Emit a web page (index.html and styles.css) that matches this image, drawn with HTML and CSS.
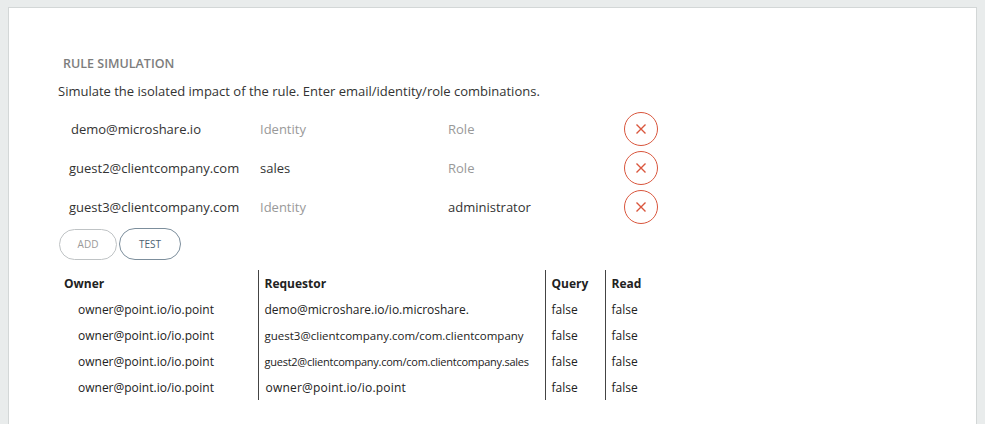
FILE: index.html
```html
<!DOCTYPE html>
<html>
<head>
<meta charset="utf-8">
<link rel="stylesheet" href="styles.css">
</head>
<body>
<div class="card">
  <div class="heading">RULE SIMULATION</div>
  <div class="desc">Simulate the isolated impact of the rule. Enter email/identity/role combinations.</div>
  <div class="sim-rows">
    <div class="sim-row">
      <div class="field email e1">demo@microshare.io</div>
      <div class="field ph">Identity</div>
      <div class="field ph">Role</div>
      <button class="remove"><svg width="12" height="12" viewBox="0 0 12 12"><path d="M1.5 1.5L10.5 10.5M10.5 1.5L1.5 10.5" stroke="#d9563d" stroke-width="1.4" fill="none"/></svg></button>
    </div>
    <div class="sim-row">
      <div class="field email">guest2@clientcompany.com</div>
      <div class="field">sales</div>
      <div class="field ph">Role</div>
      <button class="remove"><svg width="12" height="12" viewBox="0 0 12 12"><path d="M1.5 1.5L10.5 10.5M10.5 1.5L1.5 10.5" stroke="#d9563d" stroke-width="1.4" fill="none"/></svg></button>
    </div>
    <div class="sim-row">
      <div class="field email">guest3@clientcompany.com</div>
      <div class="field ph">Identity</div>
      <div class="field">administrator</div>
      <button class="remove"><svg width="12" height="12" viewBox="0 0 12 12"><path d="M1.5 1.5L10.5 10.5M10.5 1.5L1.5 10.5" stroke="#d9563d" stroke-width="1.4" fill="none"/></svg></button>
    </div>
  </div>
  <div class="actions">
    <button class="pill add">ADD</button>
    <button class="pill test">TEST</button>
  </div>
  <table class="results">
    <thead>
      <tr><th class="c-owner">Owner</th><th class="c-req">Requestor</th><th class="c-q">Query</th><th class="c-r">Read</th></tr>
    </thead>
    <tbody>
      <tr><td class="c-owner">owner@point.io/io.point</td><td class="c-req">demo@microshare.io/io.microshare.</td><td class="c-q">false</td><td class="c-r">false</td></tr>
      <tr><td class="c-owner">owner@point.io/io.point</td><td class="c-req small">guest3@clientcompany.com/com.clientcompany</td><td class="c-q">false</td><td class="c-r">false</td></tr>
      <tr><td class="c-owner">owner@point.io/io.point</td><td class="c-req smaller">guest2@clientcompany.com/com.clientcompany.sales</td><td class="c-q">false</td><td class="c-r">false</td></tr>
      <tr><td class="c-owner">owner@point.io/io.point</td><td class="c-req spaced">owner@point.io/io.point</td><td class="c-q">false</td><td class="c-r">false</td></tr>
    </tbody>
  </table>
</div>
</body>
</html>
```
FILE: styles.css
```css
html, body {
  margin: 0;
  padding: 0;
  height: 100%;
  overflow: hidden;
}
body {
  background: #e9ecec;
  font-family: "Open Sans", "Noto Sans", sans-serif;
  color: #333;
}
.card {
  margin: 7px 8px 0 8px;
  height: 100%;
  box-sizing: border-box;
  background: #fff;
  border: 1px solid #d3d7d7;
  border-bottom: none;
  padding: 48px 0 0 49px;
}
.heading {
  margin-left: 5px;
  font-size: 12.5px;
  line-height: 16px;
  color: #7d7d7d;
  font-weight: 600;
  letter-spacing: 0;
}
.desc {
  margin-top: 10px;
  font-size: 13px;
  line-height: 18px;
  color: #333;
}
.sim-rows {
  margin-top: 9px;
  display: flex;
  flex-direction: column;
}
.sim-row {
  display: flex;
  align-items: center;
  height: 39px;
}
.field {
  width: 188px;
  padding-left: 12px;
  box-sizing: border-box;
  font-size: 13px;
  color: #333;
}
.field.email {
  width: 190px;
  padding-left: 11px;
}
.field.email.e1 {
  padding-left: 13px;
}
.field.ph {
  color: #999;
}
.remove {
  width: 34px;
  height: 34px;
  border-radius: 50%;
  border: 1px solid #d9563d;
  background: #fff;
  padding: 0;
  display: flex;
  align-items: center;
  justify-content: center;
}
.actions {
  display: flex;
  gap: 2px;
  margin-top: 2px;
  margin-left: 1px;
  align-items: center;
}
.pill {
  font-family: "Open Sans", "Noto Sans", sans-serif;
  font-size: 10px;
  background: #fff;
  border-radius: 16px;
  padding: 0;
}
.add {
  width: 58px;
  height: 31px;
  border: 1px solid #bfc3c5;
  color: #9a9a9a;
}
.test {
  width: 62px;
  height: 32px;
  border: 1.5px solid #7c8e9c;
  color: #4d6272;
}
.results {
  margin-top: 10px;
  border-collapse: collapse;
  table-layout: fixed;
  font-size: 12px;
}
.results th, .results td {
  box-sizing: border-box;
  height: 26px;
  padding: 0 0 0 6px;
  text-align: left;
  vertical-align: middle;
  white-space: nowrap;
  overflow: visible;
  color: #222;
}
.results th {
  font-weight: 700;
}
.c-owner { width: 200px; }
.results td.c-owner { padding-left: 20px; }
.c-req { width: 287px; border-left: 1px solid #444; }
.c-q { width: 60px; border-left: 1px solid #444; }
.c-r { width: 55px; border-left: 1px solid #444; }
.results td.small { font-size: 11.5px; }
.results td.smaller { font-size: 11px; letter-spacing: -0.25px; }
.results td.spaced { padding-left: 7px; letter-spacing: 0.2px; }
```
